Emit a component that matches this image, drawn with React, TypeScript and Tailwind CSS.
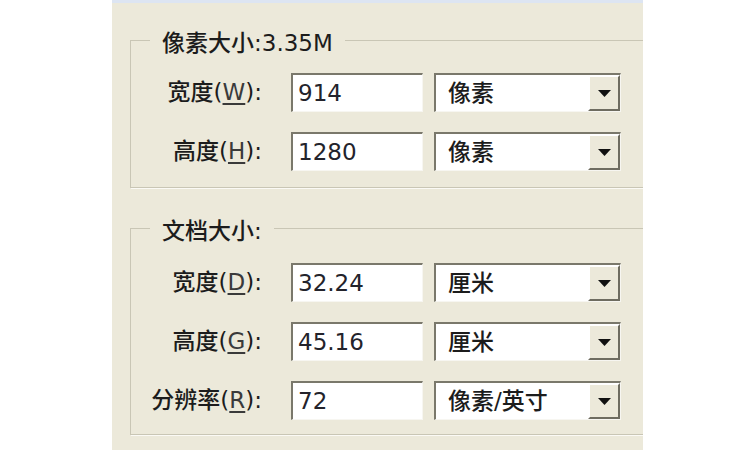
import React from 'react'

const font = { fontFamily: '"DejaVu Sans", "Noto Sans CJK SC", sans-serif' }

function Field({ value }: { value: string }) {
  return (
    <div className="ml-[29px] flex h-[39px] w-[132px] items-center border-t-2 border-l-2 border-r border-b border-t-[#7a786b] border-l-[#7a786b] border-r-[#f7f6f1] border-b-[#f7f6f1] bg-white pl-[5px] text-[#23232b]">
      {value}
    </div>
  )
}

function Combo({ value }: { value: string }) {
  return (
    <div className="ml-[11px] flex h-[39px] w-[187px] border-t-2 border-l-2 border-r border-b border-t-[#7a786b] border-l-[#7a786b] border-r-[#f7f6f1] border-b-[#f7f6f1] bg-white">
      <div className="flex flex-1 items-center pl-[12px] text-[#1c1c1c]">{value}</div>
      <div className="flex w-[32px] items-center justify-center border-2 border-t-white border-l-white border-r-[#6e6c60] border-b-[#6e6c60] bg-[#ECE9DA]">
        <svg width="13" height="7" viewBox="0 0 13 7">
          <polygon points="0,0 13,0 6.5,7" fill="#111" />
        </svg>
      </div>
    </div>
  )
}

function Row({ label, hot, value, unit }: { label: string; hot: string; value: string; unit: string }) {
  return (
    <div className="flex h-[39px] items-center">
      <div className="w-[131px] whitespace-nowrap text-right text-[#1c1c1c]">
        {label}(<span className="underline underline-offset-[3px] text-[#3a3a3a]">{hot}</span>):
      </div>
      <Field value={value} />
      <Combo value={unit} />
    </div>
  )
}

function Group({ title, children, className }: { title: string; children: React.ReactNode; className?: string }) {
  return (
    <fieldset className={`w-[540px] border border-[#c9c6b5] shadow-[1px_1px_0_#fbfaf5] ${className ?? ''}`}>
      <legend className="ml-[19px] px-[12px] pt-[6px] leading-[26px] text-[#1c1c1c]">{title}</legend>
      {children}
    </fieldset>
  )
}

export default function App() {
  return (
    <div className="flex h-[450px] w-[750px] bg-white text-[23px] font-medium" style={font}>
      <div className="ml-[112px] h-full w-[531px] overflow-hidden border-t-[3px] border-[#dde5f2] bg-[#ECE9DA] pl-[18px] pt-[21px]">
        <Group title="像素大小:3.35M">
          <div className="flex flex-col gap-[20px] pt-[17px] pb-[16px]">
            <Row label="宽度" hot="W" value="914" unit="像素" />
            <Row label="高度" hot="H" value="1280" unit="像素" />
          </div>
        </Group>
        <Group title="文档大小:" className="mt-[24px]">
          <div className="flex flex-col gap-[20px] pt-[19px] pb-[14px]">
            <Row label="宽度" hot="D" value="32.24" unit="厘米" />
            <Row label="高度" hot="G" value="45.16" unit="厘米" />
            <Row label="分辨率" hot="R" value="72" unit="像素/英寸" />
          </div>
        </Group>
      </div>
    </div>
  )
}
